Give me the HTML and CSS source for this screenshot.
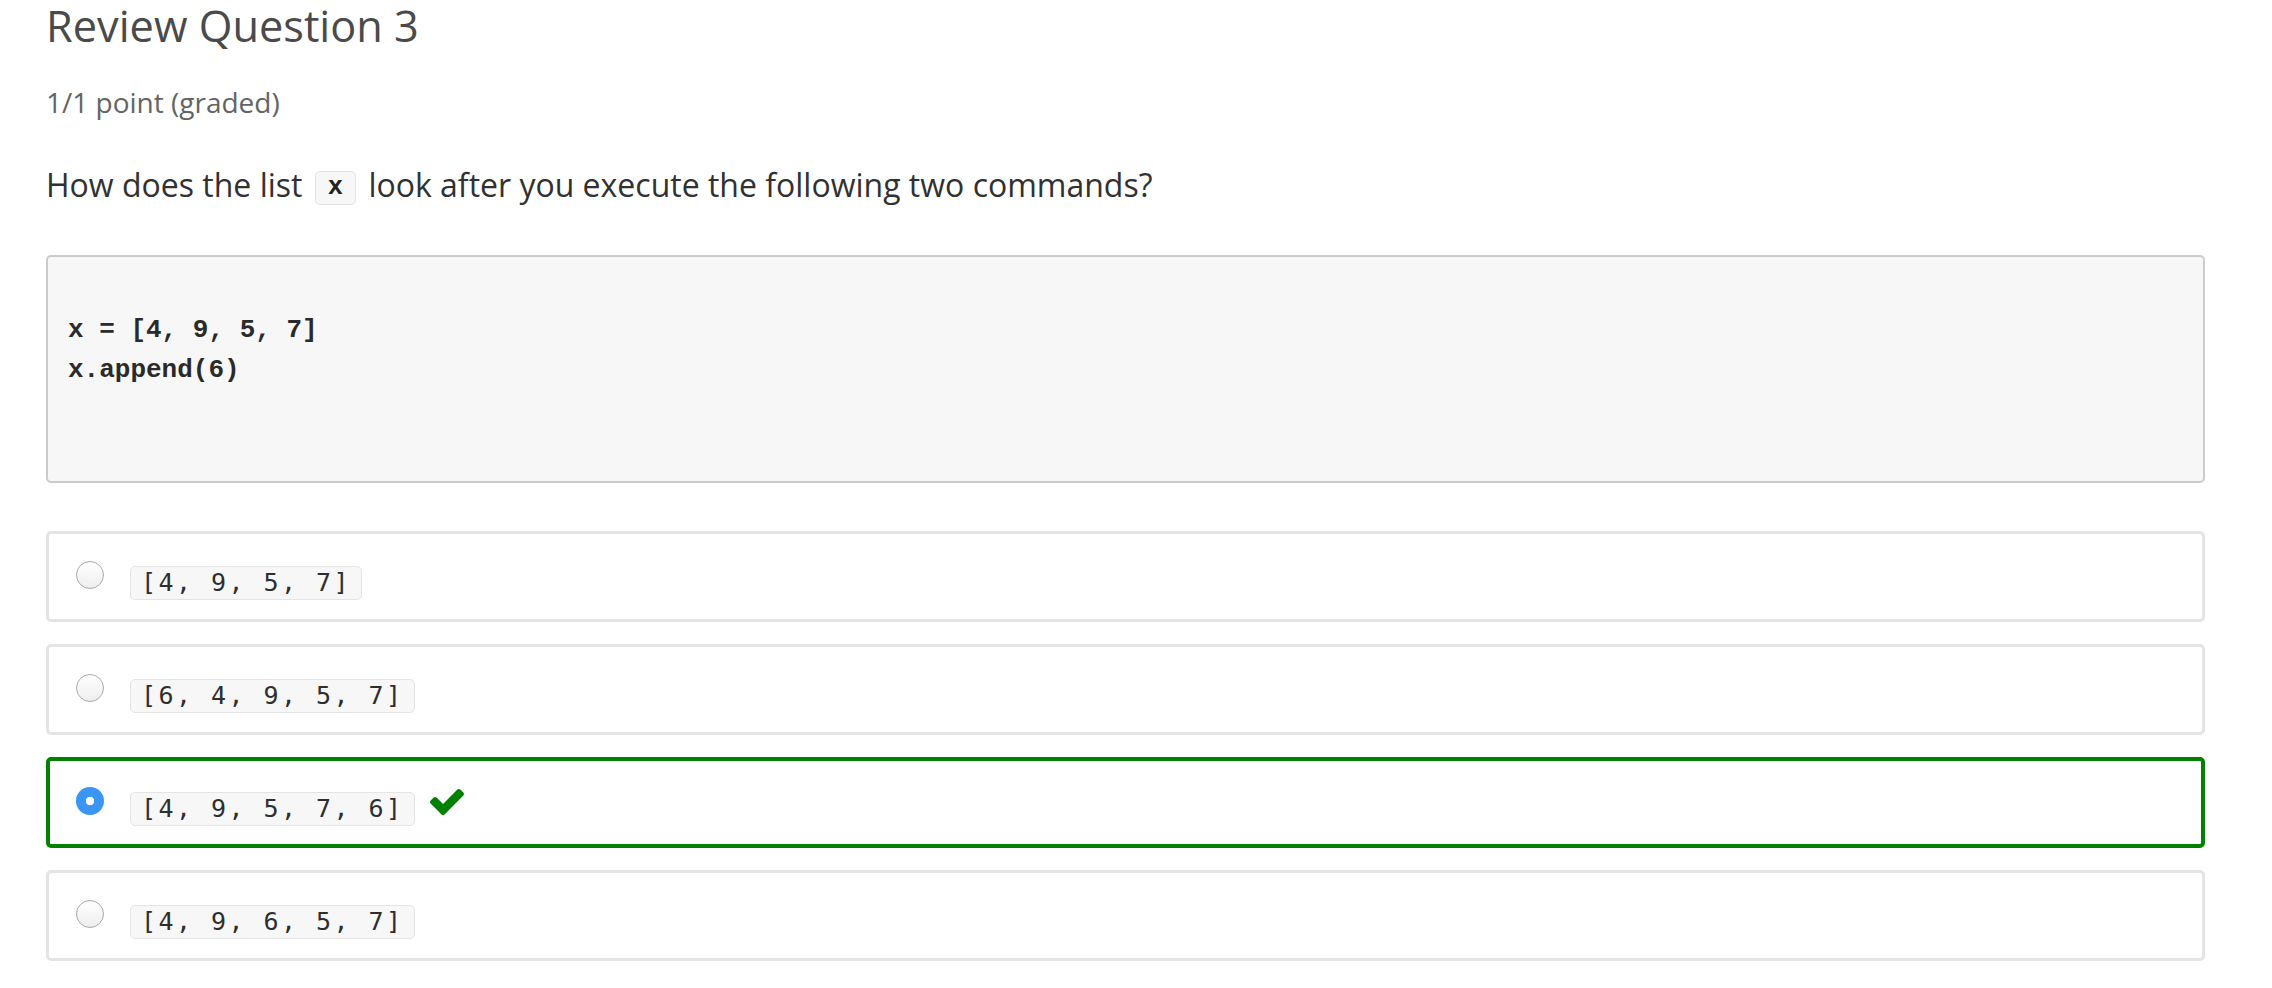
FILE: index.html
```html
<!DOCTYPE html>
<html lang="en">
<head>
<meta charset="utf-8">
<title>Review Question 3</title>
<link rel="stylesheet" href="styles.css">
</head>
<body>
<main class="problem">
  <h3 class="title">Review Question 3</h3>
  <div class="points">1/1 point (graded)</div>
  <p class="question">How does the list <code class="inline-code">x</code> look after you execute the following two commands?</p>
  <pre class="code-block">x = [4, 9, 5, 7]
x.append(6)</pre>
  <div class="choices">
    <label class="choice">
      <span class="radio"></span>
      <code class="chip">[4, 9, 5, 7]</code>
    </label>
    <label class="choice">
      <span class="radio"></span>
      <code class="chip">[6, 4, 9, 5, 7]</code>
    </label>
    <label class="choice correct">
      <span class="radio checked"></span>
      <code class="chip">[4, 9, 5, 7, 6]</code>
      <svg class="check" viewBox="121 334 1550 1188" width="34" height="26" aria-hidden="true"><path fill="#008100" d="M1671 566q0 40-28 68l-724 724-136 136q-28 28-68 28t-68-28l-136-136-362-362q-28-28-28-68t28-68l136-136q28-28 68-28t68 28l294 295 656-657q28-28 68-28t68 28l136 136q28 28 28 68z"/></svg>
    </label>
    <label class="choice">
      <span class="radio"></span>
      <code class="chip">[4, 9, 6, 5, 7]</code>
    </label>
  </div>
</main>
</body>
</html>
```

FILE: styles.css
```css
html, body {
  margin: 0;
  padding: 0;
  background: #ffffff;
}

body {
  font-family: "Open Sans", "Noto Sans", sans-serif;
}

.problem {
  width: 2159px;
  margin-left: 46px;
}

.title {
  margin: 0;
  font-size: 43.3px;
  line-height: 52px;
  font-weight: 400;
  color: #4a4a4a;
}

.points {
  margin-top: 31px;
  font-size: 28px;
  line-height: 38px;
  color: #646464;
}

.question {
  margin: 44px 0 0;
  font-size: 32px;
  line-height: 40px;
  color: #313131;
}

.inline-code {
  box-sizing: border-box;
  display: inline-block;
  vertical-align: middle;
  height: 34px;
  line-height: 32px;
  padding: 0 12px;
  margin: 0 4px;
  background: #f7f7f7;
  border: 1px solid #e2e2e2;
  border-radius: 5px;
  font-family: "Liberation Mono", "Courier New", monospace;
  font-weight: bold;
  font-size: 25.5px;
  color: #222;
}

.code-block {
  margin: 50px 0 0;
  padding: 53px 20px 91px 20px;
  background: #f7f7f7;
  border: 2px solid #cbcbcb;
  border-radius: 5px;
  font-family: "Liberation Mono", "Courier New", monospace;
  font-weight: bold;
  font-size: 26px;
  line-height: 40px;
  color: #2a2a2a;
}

.choices {
  margin-top: 48px;
  display: flex;
  flex-direction: column;
  gap: 22px;
}

.choice {
  box-sizing: border-box;
  height: 91px;
  display: flex;
  align-items: center;
  padding-left: 27px;
  border: 3px solid #e4e4e4;
  border-radius: 5px;
}

.choice.correct {
  border: 4px solid #008100;
  padding-left: 26px;
}

.radio {
  box-sizing: border-box;
  width: 28px;
  height: 28px;
  border-radius: 50%;
  border: 1px solid #a9a9a9;
  background: linear-gradient(#ffffff, #eeeeee);
  margin-top: -4px;
  flex: none;
}

.radio.checked {
  border: none;
  background: radial-gradient(circle, #ffffff 0 4px, #3b95f5 4.5px);
}

.chip {
  box-sizing: border-box;
  display: inline-block;
  height: 34px;
  line-height: 32px;
  margin-left: 26px;
  margin-top: 12px;
  padding: 0 10px;
  background: #f7f7f7;
  border: 1px solid #e4e4e4;
  border-radius: 5px;
  font-family: "DejaVu Sans Mono", monospace;
  font-size: 25px;
  letter-spacing: 2.45px;
  color: #2e2e2e;
  white-space: pre;
}

.check {
  margin-left: 15px;
  margin-top: -2px;
}
```
